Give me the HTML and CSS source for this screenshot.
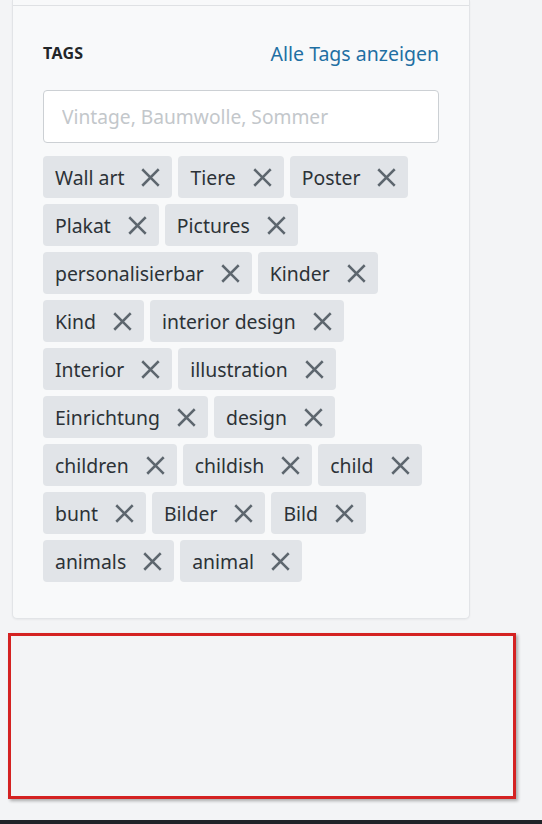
FILE: index.html
```html
<!DOCTYPE html>
<html lang="de">
<head>
<meta charset="utf-8">
<title>Tags</title>
<link rel="stylesheet" href="styles.css">
</head>
<body>
<div class="page">
  <div class="card">
    <div class="card-top"></div>
    <section class="tags-section">
      <div class="tags-head">
        <h3 class="tags-title">TAGS</h3>
        <a class="tags-link" href="#">Alle Tags anzeigen</a>
      </div>
      <input class="tags-input" type="text" placeholder="Vintage, Baumwolle, Sommer">
      <ul class="tag-list">
        <li class="tag">Wall art<svg class="x" viewBox="0 0 20 20"><path d="M3 3L17 17M17 3L3 17"/></svg></li>
        <li class="tag">Tiere<svg class="x" viewBox="0 0 20 20"><path d="M3 3L17 17M17 3L3 17"/></svg></li>
        <li class="tag">Poster<svg class="x" viewBox="0 0 20 20"><path d="M3 3L17 17M17 3L3 17"/></svg></li>
        <li class="tag">Plakat<svg class="x" viewBox="0 0 20 20"><path d="M3 3L17 17M17 3L3 17"/></svg></li>
        <li class="tag">Pictures<svg class="x" viewBox="0 0 20 20"><path d="M3 3L17 17M17 3L3 17"/></svg></li>
        <li class="tag">personalisierbar<svg class="x" viewBox="0 0 20 20"><path d="M3 3L17 17M17 3L3 17"/></svg></li>
        <li class="tag">Kinder<svg class="x" viewBox="0 0 20 20"><path d="M3 3L17 17M17 3L3 17"/></svg></li>
        <li class="tag">Kind<svg class="x" viewBox="0 0 20 20"><path d="M3 3L17 17M17 3L3 17"/></svg></li>
        <li class="tag">interior design<svg class="x" viewBox="0 0 20 20"><path d="M3 3L17 17M17 3L3 17"/></svg></li>
        <li class="tag">Interior<svg class="x" viewBox="0 0 20 20"><path d="M3 3L17 17M17 3L3 17"/></svg></li>
        <li class="tag">illustration<svg class="x" viewBox="0 0 20 20"><path d="M3 3L17 17M17 3L3 17"/></svg></li>
        <li class="tag">Einrichtung<svg class="x" viewBox="0 0 20 20"><path d="M3 3L17 17M17 3L3 17"/></svg></li>
        <li class="tag">design<svg class="x" viewBox="0 0 20 20"><path d="M3 3L17 17M17 3L3 17"/></svg></li>
        <li class="tag">children<svg class="x" viewBox="0 0 20 20"><path d="M3 3L17 17M17 3L3 17"/></svg></li>
        <li class="tag">childish<svg class="x" viewBox="0 0 20 20"><path d="M3 3L17 17M17 3L3 17"/></svg></li>
        <li class="tag">child<svg class="x" viewBox="0 0 20 20"><path d="M3 3L17 17M17 3L3 17"/></svg></li>
        <li class="tag">bunt<svg class="x" viewBox="0 0 20 20"><path d="M3 3L17 17M17 3L3 17"/></svg></li>
        <li class="tag">Bilder<svg class="x" viewBox="0 0 20 20"><path d="M3 3L17 17M17 3L3 17"/></svg></li>
        <li class="tag">Bild<svg class="x" viewBox="0 0 20 20"><path d="M3 3L17 17M17 3L3 17"/></svg></li>
        <li class="tag">animals<svg class="x" viewBox="0 0 20 20"><path d="M3 3L17 17M17 3L3 17"/></svg></li>
        <li class="tag">animal<svg class="x" viewBox="0 0 20 20"><path d="M3 3L17 17M17 3L3 17"/></svg></li>
      </ul>
    </section>
  </div>
  <div class="highlight-box"></div>
  <div class="bottom-bar"></div>
</div>
</body>
</html>
```
FILE: styles.css
```css
* { box-sizing: border-box; }
html, body { margin: 0; padding: 0; }
body {
  background: #f3f4f6;
  font-family: "Noto Sans", "Open Sans", "Liberation Sans", sans-serif;
  color: #2c3237;
}
.page {
  height: 824px;
  display: flex;
  flex-direction: column;
}
.card {
  margin: 0 72px 0 12px;
  background: #f8f9fa;
  border: 1px solid #e2e4e7;
  border-top: none;
  border-radius: 0 0 5px 5px;
  box-shadow: 0 1px 2px rgba(0,0,0,0.05);
}
.card-top {
  height: 6px;
  border-bottom: 1px solid #dfe1e4;
}
.tags-section {
  padding: 33px 30px 36px 30px;
}
.tags-head {
  display: flex;
  justify-content: space-between;
  align-items: center;
  height: 28px;
}
.tags-title {
  margin: 0;
  font-size: 16px;
  font-weight: 700;
  color: #222629;
  letter-spacing: 0.3px;
}
.tags-link {
  font-size: 19.5px;
  color: #1f6fa3;
  text-decoration: none;
}
.tags-input {
  display: block;
  width: 100%;
  height: 53px;
  margin-top: 23px;
  padding: 0 18px;
  border: 1px solid #ccd0d4;
  border-radius: 4px;
  background: #fff;
  font-family: inherit;
  font-size: 19.2px;
  color: #333;
}
.tags-input::placeholder { color: #c3c7cb; }
.tag-list {
  list-style: none;
  margin: 13px 0 0 0;
  padding: 0;
  display: flex;
  flex-wrap: wrap;
  gap: 6px;
}
.tag {
  display: flex;
  align-items: center;
  height: 42px;
  padding: 1px 11px 0 12px;
  background: #e1e4e8;
  border-radius: 4px;
  font-size: 19.4px;
  color: #2c3237;
  white-space: nowrap;
}
.x {
  width: 21px;
  height: 21px;
  margin-left: 16px;
  fill: none;
  stroke: #5d666e;
  stroke-width: 2.4;
  stroke-linecap: square;
}
.highlight-box {
  margin: 14px 26px 0 8px;
  height: 166px;
  border: 3px solid #d42222;
  box-shadow: 2px 2px 3px rgba(0,0,0,0.3);
}
.bottom-bar {
  margin-top: auto;
  height: 4px;
  background: #202328;
}
```
